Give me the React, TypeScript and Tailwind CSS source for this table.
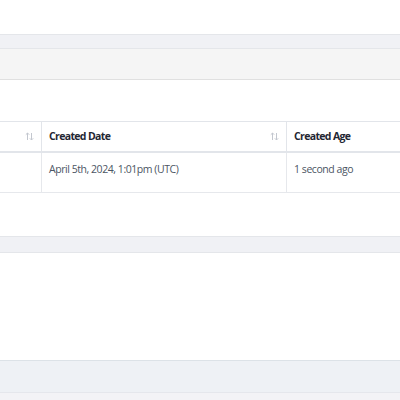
import React from "react";

const SortIcon = () => (
  <svg width="9" height="9" viewBox="0 0 9 9" fill="none" stroke="#c3c7cf" strokeWidth="1" className="shrink-0">
    <path d="M2.5 8V1M0.8 2.7L2.5 1l1.7 1.7" />
    <path d="M6.5 1v7M4.8 6.3L6.5 8l1.7-1.7" />
  </svg>
);

export default function App() {
  return (
    <div className="w-[400px] h-[400px] overflow-hidden bg-white font-['Open_Sans',sans-serif] text-[10.5px] tracking-[-0.45px]">
      <div className="h-[34px]" />
      <div className="h-[15px] border-y border-[#e4e6ea] bg-[#f0f1f5]" />
      <div className="h-[31px] border-b border-[#e0e0e0] bg-[#f5f5f5]" />
      <div className="h-[41px]" />

      <div className="w-[520px]">
        <div className="flex h-[32px] border-t border-b-2 border-[#e2e5ea]">
          <div className="w-[42px] border-r border-[#e2e5ea] flex items-center justify-end pr-[7px]">
            <SortIcon />
          </div>
          <div className="w-[245px] border-r border-[#e2e5ea] flex items-center justify-between pl-[7px] pr-[7px]">
            <span className="font-bold tracking-[-0.65px] text-[#1f2733]">Created Date</span>
            <SortIcon />
          </div>
          <div className="flex-1 flex items-center pl-[7px]">
            <span className="font-bold tracking-[-0.65px] text-[#1f2733]">Created Age</span>
          </div>
        </div>
        <div className="flex h-[40px] border-b border-[#e6e8ec] text-[#4b5563]">
          <div className="w-[42px] border-r border-[#e6e8ec]" />
          <div className="w-[245px] border-r border-[#e6e8ec] pl-[7px] pt-[9px]">April 5th, 2024, 1:01pm (UTC)</div>
          <div className="flex-1 pl-[7px] pt-[9px]">1 second ago</div>
        </div>
      </div>

      <div className="h-[43px]" />
      <div className="h-[17px] border-y border-[#e4e6ea] bg-[#f0f1f5]" />
      <div className="h-[107px]" />
      <div className="h-[33px] border-t border-b border-t-[#dce2e7] border-b-[#e5e7ec] bg-[#eef1f5]" />
      <div className="h-[10px] bg-[#f3f3f6]" />
    </div>
  );
}
